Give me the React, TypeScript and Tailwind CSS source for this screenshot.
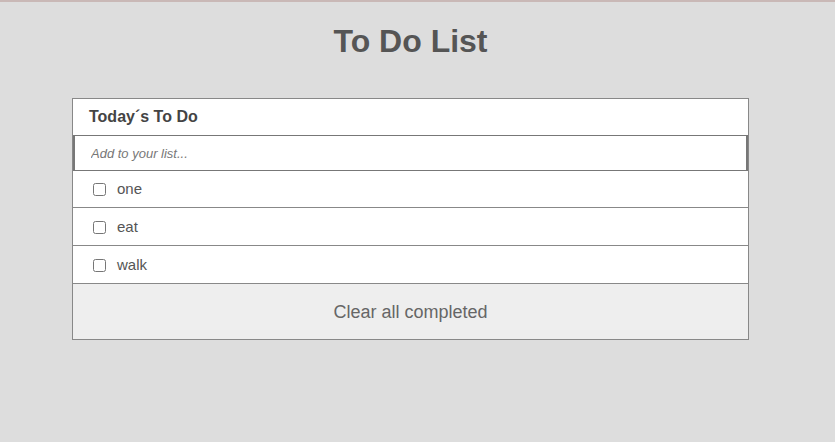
import React from "react";

const items = ["one", "eat", "walk"];

export default function App() {
  return (
    <div className="min-h-[442px] w-full bg-[#dddddd] border-t-2 border-[#c9b8b6]" style={{ fontFamily: '"Liberation Sans", Arial, sans-serif' }}>
      <h1 className="pt-[19px] h-[96px] text-center text-[32px] font-bold leading-[40px] text-[#555555] w-[821px]">To Do List</h1>
      <div className="ml-[72px] w-[677px] border border-[#888888] bg-white">
        <div className="h-[36px] flex items-center pl-[16px] text-[16px] font-bold text-[#444444]">Today´s To Do</div>
        <input
          className="block h-[36px] w-full border border-[#777777] border-l-2 border-r-2 px-[16px] text-[13px] italic text-[#555] placeholder:text-[#777777] outline-none"
          placeholder="Add to your list..."
        />
        {items.map((t, i) => (
          <div
            key={t}
            className={
              i === 0
                ? "h-[36px] flex items-center pl-[20px] text-[15px] text-[#555555]"
                : "h-[38px] pt-px border-t border-[#888888] flex items-center pl-[20px] text-[15px] text-[#555555]"
            }
          >
            <input type="checkbox" className="w-[13px] h-[13px] m-0 mr-[11px]" />
            <span>{t}</span>
          </div>
        ))}
        <div className="h-[56px] pt-[2px] border-t border-[#888888] bg-[#eeeeee] flex items-center justify-center text-[18px] text-[#666666]">
          Clear all completed
        </div>
      </div>
    </div>
  );
}
